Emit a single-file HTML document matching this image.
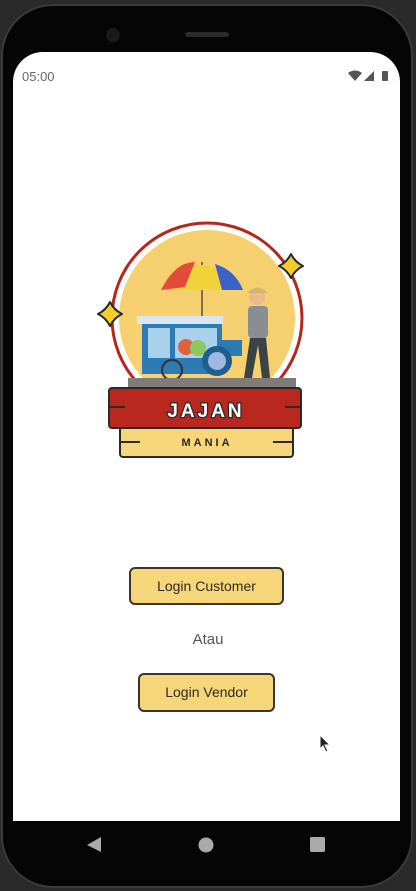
<!DOCTYPE html>
<html><head><meta charset="utf-8"><style>
html,body{margin:0;padding:0}
body{width:416px;height:891px;background:#2a2a2a;position:relative;overflow:hidden;font-family:"Liberation Sans",sans-serif}
.phone{position:absolute;left:1px;top:4px;width:412px;height:884px;background:#050505;border-radius:52px;border:2px solid #3a3a3a;box-sizing:border-box}
.screen{position:absolute;left:13px;top:52px;width:387px;height:769px;background:#fff;border-radius:30px 30px 0 0}
.status{position:absolute;left:22px;top:69px;font-size:13px;color:#666}
.btn{position:absolute;background:#f6d678;border:2px solid #3a3530;border-radius:6px;box-sizing:border-box;color:#2e2a22;font-size:14px;text-align:center}
</style></head><body>
<div class="phone"></div>
<div style="position:absolute;left:106px;top:28px;width:14px;height:14px;border-radius:50%;background:#1a1a1a"></div>
<div style="position:absolute;left:185px;top:32px;width:44px;height:5px;border-radius:3px;background:#2a2a2a"></div>
<div class="screen"></div>
<div class="status">05:00</div>
<svg style="position:absolute;left:348px;top:70px" width="45" height="12" viewBox="0 0 45 12">
<path d="M0 3 Q7 -2 14 3 L7 11Z" fill="#555"/>
<path d="M16 11 L26 1 L26 11Z" fill="#555"/>
<rect x="34" y="1" width="6" height="10" rx="1" fill="#555"/>
</svg>
<svg style="position:absolute;left:90px;top:210px" width="230" height="260" viewBox="90 210 230 260">
<circle cx="207" cy="318" r="95" fill="#fff" stroke="#b3281e" stroke-width="3"/>
<circle cx="207" cy="318" r="88" fill="#f6d06e"/>
<path d="M110 302 Q114 310 122 314 Q114 318 110 326 Q106 318 98 314 Q106 310 110 302Z" fill="#f4cd2a" stroke="#2a2a2a" stroke-width="2" stroke-linejoin="round"/>
<path d="M291 254 Q295 262 303 266 Q295 270 291 278 Q287 270 279 266 Q287 262 291 254Z" fill="#f4cd2a" stroke="#2a2a2a" stroke-width="2" stroke-linejoin="round"/>
<line x1="202" y1="262" x2="202" y2="316" stroke="#8a6b4a" stroke-width="2"/>
<path d="M161 290 Q200 240 243 290 Z" fill="#f2d23a"/>
<path d="M161 290 Q175 262 195 262 L185 287Z" fill="#e24a3a"/>
<path d="M215 264 Q235 270 243 290 L222 290Z" fill="#3a62c8"/>
<rect x="137" y="316" width="86" height="8" fill="#d8e6f2"/>
<rect x="142" y="324" width="80" height="50" fill="#2d7bb5"/>
<rect x="148" y="328" width="22" height="30" fill="#a9d1ea"/>
<rect x="175" y="328" width="42" height="30" fill="#a9d1ea"/>
<circle cx="186" cy="347" r="8" fill="#e06040"/><circle cx="198" cy="348" r="8" fill="#8cc760"/>
<rect x="220" y="340" width="22" height="16" fill="#2d7bb5"/>
<circle cx="217" cy="361" r="15" fill="#1f5f90"/><circle cx="217" cy="361" r="9" fill="#9fb8e0"/>
<circle cx="172" cy="370" r="10" fill="none" stroke="#333" stroke-width="2"/>
<circle cx="257" cy="297" r="8" fill="#e9b98a"/>
<path d="M247 293 Q257 282 268 293Z" fill="#d9b36a"/>
<rect x="248" y="306" width="20" height="32" rx="4" fill="#8a8e92"/>
<path d="M250 338 L244 378 L252 378 L258 345 L262 378 L270 378 L266 338Z" fill="#3a4448"/>
<rect x="128" y="378" width="168" height="10" fill="#7f7b78"/>
<rect x="120" y="424" width="173" height="33" rx="3" fill="#f6d678" stroke="#2a2a2a" stroke-width="2"/>
<rect x="109" y="388" width="192" height="40" rx="3" fill="#b8281e" stroke="#2a2a2a" stroke-width="2"/>
<line x1="109" y1="407" x2="125" y2="407" stroke="#2a2a2a" stroke-width="2"/>
<line x1="285" y1="407" x2="301" y2="407" stroke="#2a2a2a" stroke-width="2"/>
<line x1="120" y1="442" x2="140" y2="442" stroke="#2a2a2a" stroke-width="2"/>
<line x1="273" y1="442" x2="293" y2="442" stroke="#2a2a2a" stroke-width="2"/>
<text x="206" y="417" text-anchor="middle" font-family="Liberation Sans" font-weight="bold" font-size="19" fill="#fff" stroke="#2a2a2a" stroke-width="2.5" paint-order="stroke" letter-spacing="3">JAJAN</text>
<text x="207" y="446" text-anchor="middle" font-family="Liberation Sans" font-weight="bold" font-size="11" fill="#2a2a2a" letter-spacing="3">MANIA</text>
</svg>
<div class="btn" style="left:129px;top:567px;width:155px;height:38px;line-height:34px">Login Customer</div>
<div style="position:absolute;left:0;width:416px;top:631px;text-align:center;font-size:15px;color:#555">Atau</div>
<div class="btn" style="left:138px;top:673px;width:137px;height:39px;line-height:35px">Login Vendor</div>
<svg style="position:absolute;left:319px;top:734px" width="14" height="20" viewBox="0 0 14 20"><path d="M1 1 L1 15 L4 12 L7 18 L9 17 L6 11 L11 11Z" fill="#222" stroke="#fff" stroke-width="1"/></svg>
<svg style="position:absolute;left:80px;top:830px" width="260" height="30" viewBox="80 830 260 30">
<path d="M101 837 L101 852 L87 845Z" fill="#aaa"/>
<circle cx="206" cy="845" r="7.5" fill="#aaa"/>
<rect x="310" y="837" width="15" height="15" rx="1.5" fill="#aaa"/>
</svg>
</body></html>
